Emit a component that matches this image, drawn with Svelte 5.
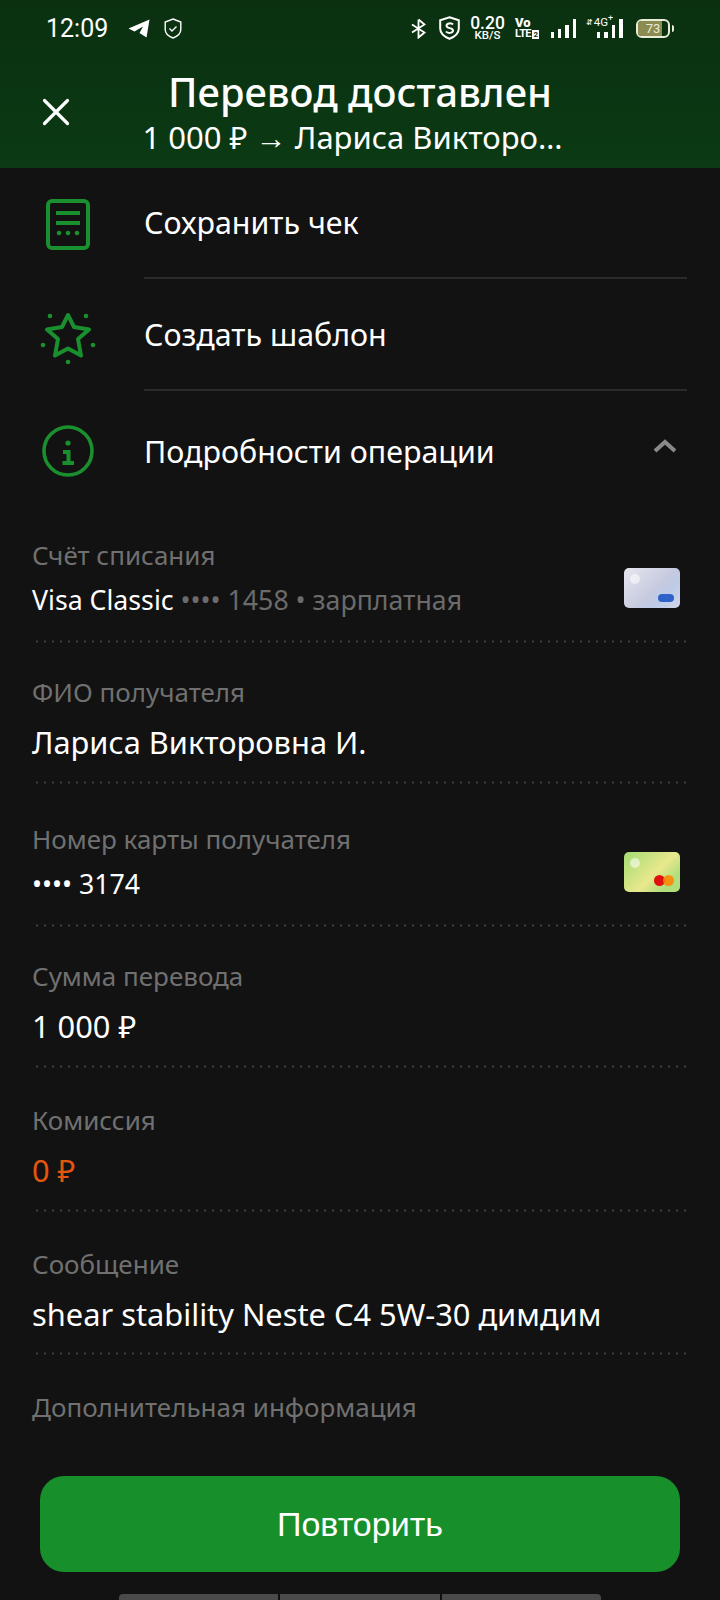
<script lang="ts">
	const fields = [
		{ label: 'Счёт списания', small: true, value: 'Visa Classic', muted: ' •••• 1458 • зарплатная', card: 'visa' },
		{ label: 'ФИО получателя', value: 'Лариса Викторовна И.' },
		{ label: 'Номер карты получателя', small: true, value: '•••• 3174', card: 'mc' },
		{ label: 'Сумма перевода', value: '1 000 ₽' },
		{ label: 'Комиссия', tall: true, value: '0 ₽', accent: true },
		{ label: 'Сообщение', tall: true, value: 'shear stability Neste C4 5W-30 димдим' }
	];
	const signal = [6, 9, 13, 19];
	const signalNet = [6, 6, 13, 19];
</script>

<div class="page">
	<header class="top">
		<div class="status">
			<span class="time">12:09</span>
			<svg class="tg" width="22" height="19" viewBox="0 0 22 19"><path d="M0.5 9.5 21.5 0.5 18.5 18.5 11.5 14 15 7.5 6.5 12.5Z" fill="#fff" /></svg>
			<svg class="guard" width="18" height="21" viewBox="0 0 18 21" fill="none" stroke="#fff" stroke-width="1.4"><path d="M9 1 16.8 4V11.5C16.8 15.5 13 18.5 9 20 5 18.5 1.2 15.5 1.2 11.5V4Z" /><path d="M5.5 10.5 8 13 12.5 8.5" /></svg>
			<span class="spacer"></span>
			<svg class="bt" width="15" height="21" viewBox="0 0 15 21" fill="none" stroke="#fff" stroke-width="1.8"><path d="M7.5 1.5V19.5L13.5 14.5 1 6.5M7.5 1.5 13.5 6.5 1 14.5" /></svg>
			<svg width="21" height="24" viewBox="0 0 21 24" fill="none" stroke="#fff" stroke-width="2"><path d="M10.5 1.2 19.8 4.2V12.5C19.8 17.5 15.5 20.8 10.5 22.8 5.5 20.8 1.2 17.5 1.2 12.5V4.2Z" /><path d="M14 8.5C12.5 6.8 7.5 6.8 7.5 9.8S14 11.5 14 14.5 8.5 17.5 7 15.5" /></svg>
			<div class="speed"><b>0.20</b><small>KB/S</small></div>
			<div class="volte"><b>Vo</b><small>LTE<i>2</i></small></div>
			<div class="bars">
				{#each signal as h}<span style="height: {h}px"></span>{/each}
			</div>
			<div class="net">
				<span class="net-label"><em>⇵</em>4G<sup>+</sup></span>
				<div class="bars">
					{#each signalNet as h}<span style="height: {h}px"></span>{/each}
				</div>
			</div>
			<div class="battery"><div class="level"></div><span>73</span></div>
		</div>
		<div class="nav">
			<svg class="close" width="28" height="28" viewBox="0 0 28 28" fill="none" stroke="#fff" stroke-width="3.2" stroke-linecap="round"><path d="M2.5 2.5 25.5 25.5M25.5 2.5 2.5 25.5" /></svg>
			<div class="titles">
				<h1>Перевод доставлен</h1>
				<p>1 000 ₽ → Лариса Викторо…</p>
			</div>
		</div>
	</header>

	<section class="actions">
		<div class="action">
			<svg width="54" height="54" viewBox="0 0 54 54" fill="none" stroke="#1a8f2e" stroke-width="4"><rect x="7" y="4" width="40" height="47" rx="4" /><path d="M15 16H39M15 26H39" /><g fill="#1a8f2e" stroke="none"><circle cx="18" cy="36" r="2.3" /><circle cx="27" cy="36" r="2.3" /><circle cx="36" cy="36" r="2.3" /></g></svg>
			<span class="action-text">Сохранить чек</span>
		</div>
		<div class="action second">
			<svg width="54" height="54" viewBox="0 0 54 54" fill="none" stroke="#1a8f2e" stroke-width="4" stroke-linejoin="round"><path d="M27 7 33 19 48 21.5 37 31 40 47.5 27 40.5 14 47.5 17 31 6 21.5 21 19Z" /><g fill="#1a8f2e" stroke="none"><circle cx="9" cy="8" r="2.3" /><circle cx="45" cy="8" r="2.3" /><circle cx="2" cy="37" r="2.3" /><circle cx="52" cy="37" r="2.3" /><circle cx="27" cy="54" r="2.3" /></g></svg>
			<span class="action-text">Создать шаблон</span>
		</div>
		<div class="action last">
			<svg width="54" height="54" viewBox="0 0 54 54" fill="none" stroke="#1a8f2e" stroke-width="3.6"><circle cx="27" cy="27" r="24" /><circle cx="27" cy="19" r="2.6" fill="#1a8f2e" stroke="none" /><path d="M22 28H27.5V39M21.5 39H33" stroke-width="4" /></svg>
			<span class="action-text">Подробности операции</span>
			<svg class="chevron" width="24" height="14" viewBox="0 0 24 14" fill="none" stroke="#8a8a8a" stroke-width="4"><path d="M2 12 12 3 22 12" /></svg>
		</div>
	</section>

	<section class="fields">
		{#each fields as f}
			<div class="field" class:small={f.small} class:tall={f.tall}>
				<div class="field-text">
					<div class="label">{f.label}</div>
					<div class="value" class:accent={f.accent}>{f.value}{#if f.muted}<span class="muted">{f.muted}</span>{/if}</div>
				</div>
				{#if f.card}
					<div class="card {f.card}">
						<span class="shine"></span>
						{#if f.card === 'visa'}
							<span class="pill"></span>
						{:else}
							<span class="mc-red"></span><span class="mc-orange"></span>
						{/if}
					</div>
				{/if}
			</div>
		{/each}
		<div class="label extra">Дополнительная информация</div>
	</section>

	<footer class="bottom">
		<button class="repeat">Повторить</button>
		<div class="gesture"><span></span><span></span><span></span></div>
	</footer>
</div>

<style>
	:global(body) {
		margin: 0;
		background: #121212;
	}

	.page {
		position: relative;
		width: 720px;
		height: 1600px;
		overflow: hidden;
		background: #121212;
		color: #fff;
		font-family: 'Noto Sans', 'Open Sans', sans-serif;
	}

	.top {
		height: 168px;
		background: linear-gradient(#0a3010, #0b3a14);
	}

	.status {
		display: flex;
		align-items: center;
		gap: 11.5px;
		height: 56px;
		padding: 0 46px 0 46px;
	}

	.time {
		font-family: 'Roboto', sans-serif;
		font-size: 25px;
		margin-right: 8px;
	}

	.guard {
		margin-left: 3px;
	}

	.spacer {
		flex: 1;
	}

	.bt {
		margin-right: 2px;
	}

	.speed {
		display: flex;
		flex-direction: column;
		align-items: center;
		width: 34px;
		margin-left: -1px;
		line-height: 1;
		font-family: 'Roboto', sans-serif;
	}

	.speed b {
		font-size: 17.5px;
		font-weight: 500;
		line-height: 14px;
	}

	.speed small {
		font-size: 11.5px;
		font-weight: 500;
		line-height: 11px;
	}

	.volte {
		display: flex;
		flex-direction: column;
		width: 24px;
		margin-left: -1px;
		line-height: 1;
		font-family: 'Roboto', sans-serif;
		font-weight: 700;
	}

	.volte b {
		font-size: 13px;
		line-height: 11px;
	}

	.volte small {
		font-size: 11px;
		letter-spacing: -0.6px;
		white-space: nowrap;
	}

	.volte i {
		font-style: normal;
		background: #fff;
		color: #0a3010;
		font-size: 8px;
		padding: 0 1px;
		margin-left: 1.5px;
		letter-spacing: 0;
	}

	.bars {
		display: flex;
		align-items: flex-end;
		gap: 4.2px;
		height: 19px;
	}

	.bars span {
		width: 3.3px;
		background: #fff;
	}

	.net {
		position: relative;
		margin-left: -2px;
		padding-left: 11px;
	}

	.net-label {
		position: absolute;
		left: 0;
		top: -2px;
		font-family: 'Roboto', sans-serif;
		font-size: 11.5px;
		line-height: 11px;
		white-space: nowrap;
	}

	.net-label em {
		font-style: normal;
		font-size: 8px;
		margin-right: 1px;
		vertical-align: 1px;
	}

	.net-label sup {
		font-size: 9px;
		line-height: 0;
	}

	.battery {
		position: relative;
		width: 34px;
		height: 19px;
		box-sizing: border-box;
		border: 2px solid #e8ecd8;
		border-radius: 6px;
		margin: 0 4px 0 2px;
	}

	.battery::after {
		content: '';
		position: absolute;
		right: -6px;
		top: 4px;
		width: 2px;
		height: 7px;
		background: #e8ecd8;
		border-radius: 0 2px 2px 0;
	}

	.level {
		position: absolute;
		inset: 0 6px 0 0;
		background: #8b8b52;
		border-radius: 3px 0 0 3px;
	}

	.battery span {
		position: absolute;
		inset: 0;
		text-align: center;
		font-family: 'Roboto', sans-serif;
		font-size: 13px;
		line-height: 15px;
		color: #e8ecd8;
	}

	.nav {
		position: relative;
		text-align: center;
	}

	.close {
		position: absolute;
		left: 42px;
		top: 42px;
		width: 28px;
		height: 28px;
	}

	.titles {
		padding-top: 14px;
	}

	h1 {
		margin: 0;
		font-size: 39.8px;
		font-weight: 500;
		line-height: 44px;
	}

	p {
		margin: 0;
		padding-right: 15px;
		font-size: 31px;
		line-height: 46px;
	}

	.actions {
		padding-left: 41px;
		padding-right: 33px;
	}

	.action {
		position: relative;
		display: flex;
		align-items: center;
		height: 111px;
		box-sizing: border-box;
		gap: 49px;
	}

	.second {
		height: 112px;
	}

	.action svg {
		flex: none;
		overflow: visible;
	}

	.action-text {
		flex: 1;
		align-self: stretch;
		display: flex;
		align-items: center;
		font-size: 30.4px;
		border-bottom: 2px solid #2b2b2b;
	}

	.last {
		height: 107px;
		padding-top: 13px;
	}

	.last .action-text {
		border-bottom: 0;
	}

	.chevron {
		position: absolute;
		right: 10px;
		top: 48px;
	}

	.fields {
		margin-top: 2px;
		padding: 0 33px 0 32px;
	}

	.field {
		display: flex;
		justify-content: space-between;
		height: 141px;
		box-sizing: border-box;
		padding: 32px 7px 0 0;
		background-image: radial-gradient(circle, #444 1px, transparent 1.2px);
		background-size: 8px 3px;
		background-repeat: repeat-x;
		background-position: 1px bottom;
	}

	.field.tall {
		height: 143.5px;
		padding-top: 35px;
	}

	.field.small {
		height: 143px;
		padding-top: 38px;
	}

	.label {
		font-size: 26px;
		line-height: 34px;
		color: #707070;
	}

	.value {
		margin-top: 13px;
		font-size: 30.8px;
		line-height: 40px;
	}

	.small .value {
		margin-top: 10px;
		font-size: 26.7px;
		line-height: 36px;
	}

	.muted {
		color: #6b6b6b;
	}

	.accent {
		color: #e3560f;
	}

	.extra {
		margin-top: 35px;
	}

	.card {
		position: relative;
		flex: none;
		align-self: flex-end;
		width: 56px;
		height: 40px;
		margin-bottom: 35px;
		border-radius: 5px;
		overflow: hidden;
	}

	.visa {
		background: linear-gradient(135deg, #e6e6ee, #c6cadf 55%, #bdcbe6 70%, #cfd6ea);
	}

	.mc {
		background: linear-gradient(135deg, #a3dc74, #e8e88c 55%, #b0de7c 80%);
	}

	.shine {
		position: absolute;
		left: 6px;
		top: 6px;
		width: 10px;
		height: 10px;
		border-radius: 50%;
		background: rgba(255, 255, 255, 0.55);
	}

	.pill {
		position: absolute;
		right: 6px;
		bottom: 6px;
		width: 16px;
		height: 8px;
		border-radius: 4px;
		background: #2f62c8;
	}

	.mc-red,
	.mc-orange {
		position: absolute;
		bottom: 6px;
		width: 11px;
		height: 11px;
		border-radius: 50%;
	}

	.mc-red {
		right: 15px;
		background: #e0120f;
	}

	.mc-orange {
		right: 6px;
		background: rgba(255, 130, 0, 0.85);
	}

	.bottom {
		position: absolute;
		left: 0;
		right: 0;
		bottom: 0;
		display: flex;
		flex-direction: column;
		align-items: center;
		background: #121212;
		padding: 14px 40px 0;
	}

	.repeat {
		width: 100%;
		height: 96px;
		border: 0;
		border-radius: 24px;
		background: #17902c;
		color: #fff;
		font-family: 'Liberation Sans', sans-serif;
		font-size: 34px;
	}

	.gesture {
		display: flex;
		gap: 2px;
		width: 482px;
		height: 6px;
		margin-top: 22px;
	}

	.gesture span {
		flex: 1;
		background: #4a4a4a;
	}

	.gesture span:first-child {
		border-radius: 4px 0 0 0;
	}

	.gesture span:last-child {
		border-radius: 0 4px 0 0;
	}
</style>
